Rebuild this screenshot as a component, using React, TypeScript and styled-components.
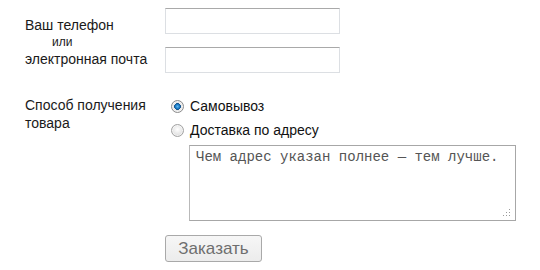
import { createGlobalStyle } from 'styled-components';
import styled from 'styled-components';

const GlobalStyle = createGlobalStyle`
  html, body {
    margin: 0;
    padding: 0;
    background: #fff;
  }
  body {
    font-family: 'Liberation Sans', Arial, sans-serif;
    font-size: 14px;
    color: #1a1a1a;
  }
`;

export default function App() {
  return (
    <>
      <GlobalStyle />
      <Form onSubmit={(e) => e.preventDefault()}>
        <Row>
          <Label>
            <Line>Ваш телефон</Line>
            <Or>или</Or>
            <Line>электронная почта</Line>
          </Label>
          <Fields>
            <TextInput type='text' />
            <TextInput type='text' />
          </Fields>
        </Row>

        <Row $top={21}>
          <Label $top={2}>
            <Line>Способ получения</Line>
            <Line>товара</Line>
          </Label>
          <Fields $gap={0}>
            <Option>
              <Radio type='radio' name='delivery' defaultChecked />
              Самовывоз
            </Option>
            <Option>
              <Radio type='radio' name='delivery' />
              Доставка по адресу
            </Option>
            <AreaBox>
              <Address defaultValue='Чем адрес указан полнее — тем лучше.' />
              <Grip width='8' height='8' viewBox='0 0 8 8'>
                <rect x='6' y='0' width='1' height='1' />
                <rect x='3' y='3' width='1' height='1' />
                <rect x='6' y='3' width='1' height='1' />
                <rect x='0' y='6' width='1' height='1' />
                <rect x='3' y='6' width='1' height='1' />
                <rect x='6' y='6' width='1' height='1' />
              </Grip>
            </AreaBox>
          </Fields>
        </Row>

        <Row $top={14}>
          <span />
          <Submit type='submit'>Заказать</Submit>
        </Row>
      </Form>
    </>
  );
}

const Form = styled.form`
  display: flex;
  flex-direction: column;
  padding: 8px 0 0 25px;
`;

const Row = styled.div<{ $top?: number }>`
  display: grid;
  grid-template-columns: 140px auto;
  align-items: start;
  margin-top: ${(p) => p.$top ?? 0}px;
`;

const Label = styled.div<{ $top?: number }>`
  display: flex;
  flex-direction: column;
  padding-top: ${(p) => p.$top ?? 8}px;
`;

const Line = styled.span`
  line-height: 18px;
  white-space: nowrap;
`;

const Or = styled.span`
  font-size: 12px;
  line-height: 16px;
  padding-left: 27px;
`;

const Fields = styled.div<{ $gap?: number }>`
  display: flex;
  flex-direction: column;
  align-items: flex-start;
  gap: ${(p) => p.$gap ?? 13}px;
`;

const TextInput = styled.input`
  box-sizing: border-box;
  width: 175px;
  height: 26px;
  margin: 0;
  padding: 2px 4px;
  border: 1px solid #dcdfe3;
  border-top-color: #a9a9a9;
  background: #fff;
  font: 14px 'Liberation Sans', Arial, sans-serif;
  outline: none;
`;

const Option = styled.label`
  display: flex;
  align-items: center;
  gap: 6px;
  height: 24px;
  padding-left: 6px;
  font-size: 14px;
  color: #111;
`;

const Radio = styled.input`
  appearance: none;
  box-sizing: border-box;
  width: 13px;
  height: 13px;
  margin: 0;
  border-radius: 50%;
  border: 1px solid #a2a2a2;
  background: radial-gradient(circle at 50% 40%, #ffffff 0%, #e6e6e6 55%, #c9c9c9 100%);
  box-shadow: inset 0 0 0 1px rgba(255, 255, 255, 0.6);

  &:checked {
    border-color: #8c8c8c;
    background: radial-gradient(
      circle at 50% 50%,
      #5db7f0 0%,
      #1a78c2 28%,
      #0e4f8a 40%,
      #eaeaea 46%,
      #d6d6d6 100%
    );
  }
`;

const AreaBox = styled.div`
  position: relative;
  margin: 3px 0 0 24px;
  width: 327px;
  height: 76px;
`;

const Address = styled.textarea`
  box-sizing: border-box;
  display: block;
  width: 100%;
  height: 100%;
  margin: 0;
  padding: 3px 6px;
  border: 1px solid #a7a7a7;
  border-left-color: #b9b9b9;
  resize: none;
  outline: none;
  font: 14px 'Liberation Mono', 'Courier New', monospace;
  color: #555;
`;

const Grip = styled.svg`
  position: absolute;
  right: 5px;
  bottom: 4px;
  fill: #9a9a9a;
`;

const Submit = styled.button`
  box-sizing: border-box;
  width: 97px;
  height: 27px;
  padding: 0;
  border: 1px solid #a9a9a9;
  border-radius: 3px;
  background: linear-gradient(#f6f6f6, #ececec);
  font: 17px 'Liberation Sans', Arial, sans-serif;
  color: #6e6e6e;
  cursor: pointer;
`;
